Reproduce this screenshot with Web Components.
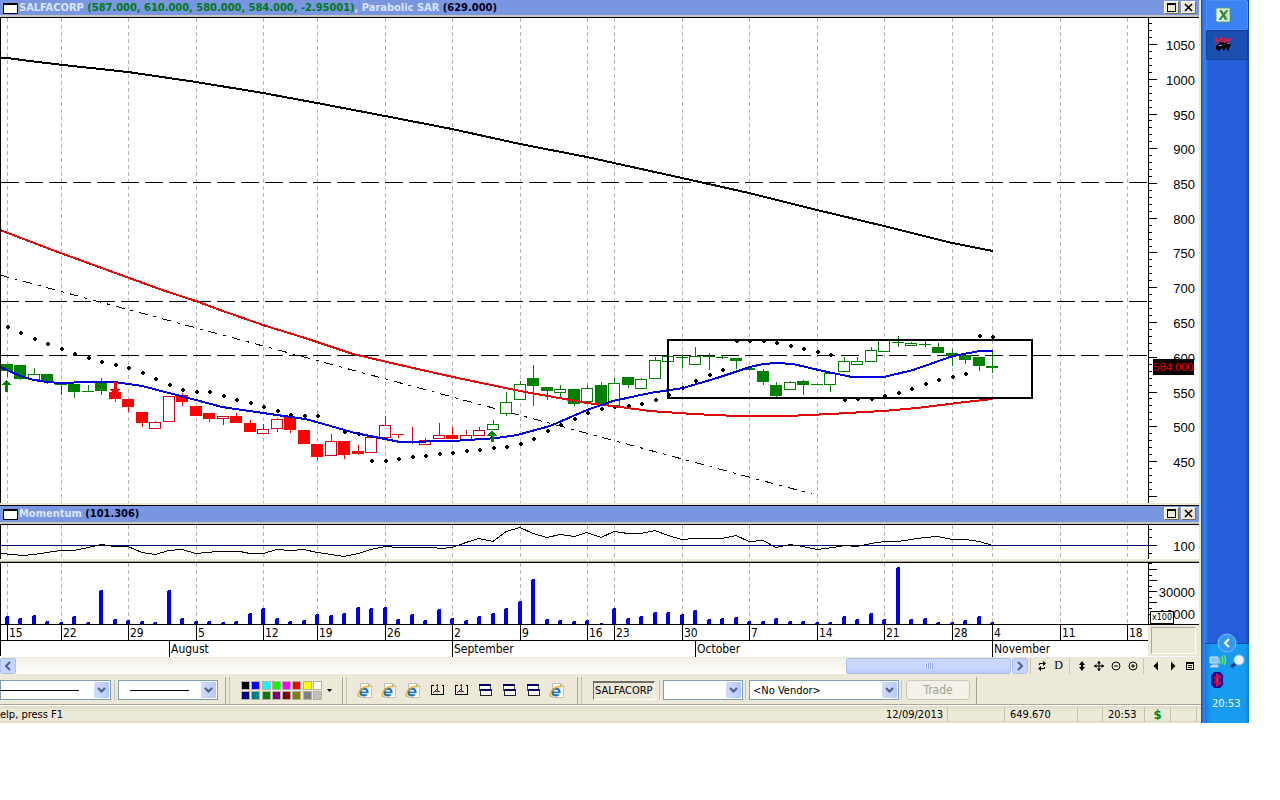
<!DOCTYPE html>
<html lang="en">
<head>
<meta charset="utf-8">
<title>SALFACORP chart</title>
<style>
  body { margin: 0; background: #fff; font: 11px/14px "DejaVu Sans Condensed", "Noto Sans", sans-serif; color: #000; }
</style>
</head>
<body>
<chart-desk></chart-desk>
<script>
const STEP = 13.5, FIRST = 7, PLOT = 1148;
const at = i => Math.floor(FIRST + STEP * i);
const DAYS = [[0,'15'],[4,'22'],[9,'29'],[14,'5'],[19,'12'],[23,'19'],[28,'26'],[33,'2'],[38,'9'],[43,'16'],[45,'23'],[50,'30'],[55,'7'],[60,'14'],[65,'21'],[70,'28'],[73,'4'],[78,'11'],[83,'18']];
const MONTHS = [[12,'August'],[33,'September'],[51,'October'],[73,'November']];
const grid = h => DAYS.map(([i]) => `<path d="M${at(i)+.5} 0V${h}" stroke="#b4b4b4" stroke-dasharray="4 3"/>`).join('');
const line = (pts, color, w, dy) => `<polyline fill="none" stroke="${color}" stroke-width="${w}" points="${pts.map(([x,y]) => x + ',' + (y - dy)).join(' ')}"/>`;

function define(name, css, html, setup) {
  const t = document.createElement('template');
  t.innerHTML = `<style>*{box-sizing:border-box}${css}</style>${html}`;
  customElements.define(name, class extends HTMLElement {
    constructor() {
      super();
      this.attachShadow({ mode: 'open' }).append(t.content.cloneNode(true));
      if (setup) setup(this, this.shadowRoot);
    }
  });
}

/* Caption strip of one chart pane, with its maximise and close buttons */
define('pane-title', `
  :host { display: flex; align-items: center; height: 17px; padding: 0 3px; background: #7b96e0; border-bottom: 2px solid #c9c7bd; font-weight: bold; color: #d9e5fb; }
  i { align-self: flex-start; width: 15px; height: 11px; margin: 3px 1px 0 0; background: #fff; border: 1px solid #000; border-top-width: 2px; }
  span { flex: 1; white-space: nowrap; }
  button { align-self: flex-start; width: 15px; height: 13px; padding: 0; margin: 1px 0 0 2px; background: #ece9d8; border: 1px solid; border-color: #fff #716f64 #716f64 #fff; display: grid; place-items: center; }
  svg { width: 9px; height: 9px; }`,
  `<i></i><span><slot></slot></span>
   <button aria-label="Maximise"><svg viewBox="0 0 9 9" fill="none" stroke="#000"><path d="M.5 1.500h8v7h-8zM0 .5h9" shape-rendering="crispEdges"/></svg></button>
   <button aria-label="Close"><svg viewBox="0 0 9 9"><path d="M1 1l7 7M8 1l-7 7" stroke="#000" stroke-width="1.600"/></svg></button>`);

const paneCss = `
  :host { display: grid; grid-template-columns: minmax(0,1fr) 51px; background: #fff; }
  svg { display: block; width: 100%; }
  .plot { border-left: 1px solid #000; }
  text { font: 13px "Liberation Sans", Arial, sans-serif; text-anchor: end; }`;

/* Price pane: candles, two averages, parabolic stops, support lines */
const CANDLES = [
 'gf364,371,364,377','gf365,379,365,380','gh374,379,368,379','gf374,381,374,384','gf384,385,384,395','gf384,392,384,398','gf391,392,385,391','gf382,391,378,395',
 'rf392,399,392,402','rf399,407,399,412','rf412,423,412,427','rh422,428,421,428','rh396,421,396,422','rf395,402,393,406','rf406,416,406,416','rf413,419,413,422','rh416,418,416,425','rf416,423,413,423','rf423,432,420,432','rh429,433,424,433','rh419,428,418,432','rf417,430,417,433','rf430,444,430,444','rf444,457,444,460','rh441,455,434,455','rf441,455,441,459','rf451,454,445,455','rh437,452,437,452','rh425,437,416,437','rf434,435,434,438','rn427,427,427,444','rh440,444,438,444','rh435,438,423,438','rf435,439,427,439','rh435,439,430,439','rh430,435,427,435',
 'gh424,429,420,429','gh402,413,392,416','gh384,399,381,399','gf378,386,365,406','gf387,391,387,400','gh389,392,385,399','gf389,404,389,406','gh388,401,385,401','gf385,404,382,404','gh383,405,378,405','gf377,385,377,388','gh379,388,378,388','gh360,378,357,378','gh356,361,356,361','gf357,358,355,368','gh356,364,347,364','gf356,357,353,370','gf357,358,355,359','gf358,361,358,369','gf368,370,368,370','gf371,382,369,385','gf385,396,382,399','gh382,389,381,389','gf381,385,380,395','gf384,385,384,385','gh373,384,373,392','gh361,371,357,371','gh361,364,357,364','gh350,361,347,361','gh340,351,340,351','gf342,343,336,347','gh343,345,342,345','gf344,345,341,347','gf347,353,343,353','gf353,356,349,366','gf355,360,355,364','gf357,366,357,371','gf366,368,351,373'];
const SAR = [327,333,339,344,349,354,358,362,365,368,373,379,385,390,392,392,396,400,403,407,411,415,416,416,0,432,434,461,461,459,457,456,454,453,451,450,448,447,444,439,431,425,419,413,409,407,406,404,400,395,388,381,375,370,341,341,341,343,346,349,352,355,400,399,399,396,393,389,384,380,377,374,336,337];
const SLOW = [[0,58],[7,58],[30,61],[63,65],[128,72],[196,82],[263,93],[317,103],[385,116],[452,129],[520,144],[587,157],[614,163],[682,178],[749,193],[817,210],[884,226],[952,243],[993,251]];
const MID = [[0,230],[55,251],[110,271],[165,291],[196,301],[220,310],[263,325],[305,338],[353,354],[387,362],[453,377],[520,391],[587,403],[620,407],[650,411],[693,414],[737,416],[787,416],[830,414],[883,411],[917,408],[957,403],[993,399]];
const FAST = [[0,367],[7,370],[20,376],[34,380],[47,382],[61,383],[88,382],[115,382],[142,386],[169,393],[196,400],[222,407],[263,413],[305,419],[320,423],[355,433],[400,442],[453,441],[497,438],[517,435],[550,426],[587,410],[613,401],[650,393],[683,388],[717,378],[750,367],[763,364],[777,363],[793,364],[823,371],[852,377],[884,377],[913,370],[933,363],[953,356],[980,351],[993,351]];
define('price-pane', paneCss + `
  svg { height: 485px; }
  .scale { position: relative; }
  output { position: absolute; left: 5px; top: 341px; width: 41px; height: 16px; background: #000; color: #f00000; font: 11px/16px "Liberation Sans", Arial, sans-serif; text-align: center; }`,
  `<svg class="plot" viewBox="1 18 1147 485" preserveAspectRatio="none" role="img" aria-label="Price chart"></svg>
   <div class="scale"><svg class="axis" viewBox="0 0 51 485"></svg><output>584.000</output></div>`,
  (host, root) => {
    const candles = CANDLES.map((c, i) => {
      const color = c[0] === 'g' ? '#008000' : (c[1] === 'f' ? '#f00' : '#d00020'), [t, b, hi, lo] = c.slice(2).split(',').map(Number), x = at(i);
      const wick = (a, z) => z > a ? `<path d="M${x+.5} ${a}V${z}" stroke="${color}"/>` : '';
      const body = c[1] === 'f' ? `<rect x="${x-6}" y="${t}" width="12" height="${b-t}" fill="${color}"/>`
        : c[1] === 'h' ? `<rect x="${x-5.5}" y="${t+.5}" width="11" height="${b-t}" fill="#fff" stroke="${color}"/>`
        : '';
      return wick(hi, c[1] === 'n' ? lo : t) + body + wick(b, lo);
    }).join('');
    const sar = SAR.map((y, i) => y ? `<path d="M${at(i)-1} ${y-1}h4v2h-4zM${at(i)} ${y-2}h2v4h-2z"/>` : '').join('');
    root.querySelector('.plot').innerHTML = `<g shape-rendering="crispEdges"><g transform="translate(0 18)">${grid(485)}</g>
      ${[182.5,301.5,355.5].map(y => `<path d="M1 ${y}H1148" stroke="#000" stroke-dasharray="18 6"/>`).join('')}
      <path d="M0 275L812 494" stroke="#000" stroke-dasharray="9 6 3 6"/>${candles}${sar}
      ${line(SLOW,'#000',2,0)}${line(MID,'#e00a0a',2,0)}${line(FAST,'#0000d8',2,0)}
      <path d="M6 380l5 5h-3v7H5v-7H2zM492 430l5 6h-3v6h-3v-6h-4z" fill="#008000"/><path d="M114 382h3v7h3l-5 7-5-7h4z" fill="#f00"/>
      <rect x="668" y="340" width="364" height="58" fill="none" stroke="#000" stroke-width="2"/></g>`;
    let s = '<path d="M.5 0V485" stroke="#000"/>';
    for (let v = 1080; v >= 400; v -= 10) {
      const y = Math.round(44 + (1050 - v) * .695) - 18;
      s += `<path d="M0 ${y+.5}h${v % 50 ? 4 : 9}" stroke="#000"/>`;
      if (v % 50 === 0 && v > 400) s += `<text x="47" y="${y+6}">${v}</text>`;
    }
    root.querySelector('.axis').innerHTML = s;
  });

const MOM = [[0,553],[13,554],[22,555],[34,554],[47,552],[61,550],[74,550],[88,547],[101,544],[115,546],[128,546],[142,552],[155,554],[169,550],[182,549],[196,553],[218,551],[240,551],[250,553],[263,553],[277,549],[290,550],[304,549],[317,552],[331,554],[344,556],[358,553],[371,549],[385,546],[398,547],[433,547],[440,548],[452,547],[466,542],[479,538],[493,541],[506,531],[520,527],[533,533],[547,537],[560,534],[574,536],[587,532],[601,537],[614,531],[628,533],[641,533],[655,530],[668,535],[682,539],[695,538],[722,538],[736,535],[749,541],[763,540],[776,547],[790,544],[803,546],[817,549],[833,547],[845,545],[857,546],[871,543],[884,541],[898,541],[911,539],[924,537],[938,536],[952,539],[965,539],[979,541],[993,545]];
define('momentum-pane', paneCss + `svg { height: 34px; }`,
  `<svg class="plot" viewBox="1 0 1147 34" preserveAspectRatio="none" role="img" aria-label="Momentum"></svg>
   <svg viewBox="0 0 51 34"><path d="M.5 0V34M0 4.500h4M0 12.500h4M0 20.500h9M0 28.500h4" stroke="#000"/><text x="47" y="26">100</text></svg>`,
  (host, root) => { root.querySelector('.plot').innerHTML = `<g shape-rendering="crispEdges">${grid(34)}<path d="M0 20.500H1149" stroke="#000070"/>${line(MOM,'#000',1,524.5)}</g>`; });

const VOLUME = [616,618,615,621,622,616,622,590,619,620,621,622,590,618,621,621,622,621,613,608,618,621,620,614,615,613,607,608,607,619,614,620,609,618,620,616,613,608,601,579,619,620,621,620,623,608,618,616,612,612,614,610,619,618,617,621,621,618,621,621,622,622,616,619,613,619,567,619,618,622,622,620,616,622];
define('volume-pane', paneCss + `
  svg { height: 61px; }
  .scale { position: relative; }
  span { position: absolute; left: 2px; bottom: 0; width: 24px; height: 13px; border: 1px solid #000; background: #fff; font-size: 9px; line-height: 11px; text-align: center; }`,
  `<svg class="plot" viewBox="1 0 1147 61" preserveAspectRatio="none" role="img" aria-label="Volume"></svg>
   <div class="scale"><svg class="axis" viewBox="0 0 51 61"><path d="M.5 0V61M0 .5h4M0 6.500h9M0 12.500h4M0 17.500h9M0 23.500h4M0 28.500h9M0 34.500h4M0 39.500h9M0 45.500h4M0 51.500h4" stroke="#000"/><text x="47" y="34">30000</text><text x="47" y="56">10000</text></svg><span>x100</span></div>`,
  (host, root) => { root.querySelector('.plot').innerHTML = `<g shape-rendering="crispEdges">${grid(61)}${VOLUME.map((y, i) => `<path d="M${at(i)-2} 61V${y-562}h1v-1h3V61z" fill="#0000e0"/>`).join('')}</g>`; });

/* Calendar below the charts: a row of week starts, a row of months */
define('date-axis', `
  :host { display: grid; grid-template-columns: minmax(0,1fr) 51px; background: #ece9d8; border-top: 1px solid #000; font-size: 12px; line-height: 16px; }
  .rows { background: #fff; border-left: 1px solid #000; }
  .row { display: grid; height: 15px; }
  .row + .row { border-top: 1px solid #000; height: 16px; }
  .row span { border-left: 1px solid #000; padding-left: 1px; white-space: nowrap; }
  .row span:first-child { border: 0; }
  .well { margin: 2px 3px 2px 3px; border: 1px solid; border-color: #aca899 #fff #fff #aca899; }`,
  `<div class="rows"><div class="row"></div><div class="row"></div></div><div class="well"></div>`,
  (host, root) => {
    [DAYS, MONTHS].forEach((set, n) => {
      const row = root.querySelectorAll('.row')[n], edges = [1, ...set.map(([i]) => at(i)), PLOT];
      row.style.gridTemplateColumns = edges.slice(1).map((e, k) => `minmax(0,${e - edges[k]}fr)`).join(' ');
      row.innerHTML = '<span></span>' + set.map(([, t]) => `<span>${t}</span>`).join('');
    });
  });

const icon = (label, art) => `<button aria-label="${label}"><svg viewBox="0 0 12 12" fill="none" stroke="#000">${art}</svg></button>`;
define('scroll-strip', `
  :host { display: flex; align-items: center; height: 20px; background: #ece9d8; border-top: 1px solid #fff; padding: 0 3px 2px 0; }
  .bar { flex: 1; display: flex; height: 16px; background: linear-gradient(#f1efe8, #fefefb); }
  .bar button { width: 16px; border: 1px solid #aebfee; border-radius: 2px; background: #c6d5fd; padding: 0; display: grid; place-items: center; }
  .bar button svg { width: 8px; height: 10px; }
  .track { flex: 1; display: grid; grid-template-columns: 830fr 165fr; padding-right: 1px; }
  .thumb { grid-column: 2; border: 1px solid #aebfee; border-radius: 2px; background: linear-gradient(#cad8fe 60%, #b8cbf8); display: grid; place-items: center; }
  .thumb i { width: 8px; height: 6px; background: repeating-linear-gradient(90deg, #eef3ff 0 1px, #8ba3dc 1px 2px); }
  .tools { display: flex; height: 16px; margin-left: 1px; }
  .tools button { width: 17px; padding: 0; border: 0; background: none; display: grid; place-items: center; font: 12px "Liberation Serif", serif; }
  .tools svg { width: 12px; height: 12px; }
  hr { width: 2px; margin: 0 2px; border: 0; border-left: 1px solid #c8c5b2; }
  hr:first-child { margin: 0 1px; }`,
  `<div class="bar"><button aria-label="Scroll left"><svg viewBox="0 0 8 10"><path d="M6 1L2 5l4 4" fill="none" stroke="#4d6185" stroke-width="2"/></svg></button>
   <div class="track"><div class="thumb"><i></i></div></div>
   <button aria-label="Scroll right"><svg viewBox="0 0 8 10"><path d="M2 1l4 4-4 4" fill="none" stroke="#4d6185" stroke-width="2"/></svg></button></div>
   <div class="tools"><hr>${icon('Refresh','<path d="M3.500 5V3.500h4M8.500 7v1.500h-4"/><path d="M7 1l3 2.500L7 6zM5 6v5L2 8.500z" fill="#000" stroke="none"/>')}
   <button>D</button><hr>
   ${icon('Stretch','<path d="M6 3v6" stroke-width="2"/><path d="M6 1l3 4H3zM6 11L3 7h6z" fill="#000" stroke="none"/>')}
   ${icon('Move','<path d="M6 1v10M1 6h10"/><path d="M6 1l2 2.500h-4zM6 11l2-2.500h-4zM1 6l2.500-2v4zM11 6L8.500 4v4z" fill="#000" stroke="none"/>')}
   ${icon('Zoom out','<circle cx="6" cy="6" r="4"/><path d="M4 6h4"/>')}
   ${icon('Zoom in','<circle cx="6" cy="6" r="4"/><path d="M4 6h4M6 4v4"/>')}<hr>
   ${icon('Previous','<path d="M8 1.500v9L3.500 6z" fill="#000" stroke="none"/>')}
   ${icon('Next','<path d="M4 1.500v9L8.500 6z" fill="#000" stroke="none"/>')}
   ${icon('List','<path d="M2.500 2.500h7v7h-7zM2 3.500h8M4 5.500h4M4 7.500h4" shape-rendering="crispEdges"/>')}</div>`);

/* Drop-down with an optional sample of the chosen line */
define('combo-box', `
  :host { display: block; height: 20px; position: relative; }
  select { appearance: none; width: 100%; height: 20px; border: 1px solid #7f9db9; border-radius: 0; background: #fff; padding: 1px 18px 0 3px; font: inherit; color: #000; }
  svg { position: absolute; right: 2px; top: 2px; width: 15px; height: 16px; background: linear-gradient(90deg, #d0dcfd, #b4c8f6); border-radius: 1px; pointer-events: none; }
  i { position: absolute; top: 10px; left: var(--rule-start, 0); width: var(--rule, 0); height: 1px; background: #000; pointer-events: none; }`,
  `<select></select><i></i><svg viewBox="0 0 15 16"><path d="M4 6l3.500 3.500L11 6" fill="none" stroke="#4d6185" stroke-width="2.200"/></svg>`,
  (host, root) => {
    const s = root.querySelector('select');
    s.setAttribute('aria-label', host.getAttribute('label'));
    s.add(new Option(host.getAttribute('value') || ''));
  });

const IE = `<svg viewBox="0 0 16 16"><path d="M3.500 1.500h8l3 3v11h-11z" fill="#fff" stroke="#c3c0b0"/><path d="M11.500 1.500v3h3z" fill="#dedbd0" stroke="#b9b6a4"/><ellipse cx="7" cy="10" rx="3.600" ry="3.400" fill="#fff" stroke="#1f74c4" stroke-width="2.200"/><path d="M4 10.300h7" stroke="#1f74c4" stroke-width="1.600"/><path d="M8 11.200h4v1.400H9z" fill="#fff"/><path d="M3 14.500c-3 .2-2-4.500 1.500-7.500S12 3.500 11 6.500" fill="none" stroke="#efb020" stroke-width="1.300"/></svg>`;
const GRAPH = `<svg viewBox="0 0 16 16" fill="none" shape-rendering="crispEdges"><path d="M4.500 3.500h-2v9h12v-9h-2" stroke="#000"/><path d="M4 11l4-4M8.500 2v7M6 9.500h5M7 3.500h2" stroke="#702848"/></svg>`;
const WINS = `<svg viewBox="0 0 16 16" shape-rendering="crispEdges"><path d="M2.500 2.500h11v6h-11z" fill="#fff" stroke="#445"/><path d="M3.500 7.500h11v6h-11z" fill="#fff" stroke="#223"/><path d="M2 2h12v2H2zM3 7h12v2H3z" fill="#000070"/></svg>`;
const COLORS = ['#000','#00f','#0ff','#0f0','#f0f','#f00','#ff0','#fff','#000080','#008080','#008000','#800080','#800000','#808000','#808080','#c0c0c0'];
define('tool-bar', `
  :host { display: flex; align-items: center; height: 29px; background: #ece9d8; border-bottom: 1px solid #aca899; }
  .grip { width: 5px; height: 27px; border-left: 1px solid #aca899; border-right: 1px solid #c4c1b0; flex: none; }
  .sep { width: 1px; height: 20px; background: #c8c5b2; margin: 0 3px 0 2px; flex: none; }
  .palette { display: grid; grid-template-columns: repeat(8, 9px); gap: 1px; margin: 0 5px 0 10px; padding: 1px; width: 83px; justify-content: space-between; }
  .palette button { width: 9px; height: 9px; padding: 0; border: 1px solid #b5b2a3; }
  .drop { padding: 0; border: 0; background: none; width: 7px; height: 12px; margin-right: 9px; display: grid; place-items: center; }
  .drop svg { width: 5px; height: 3px; }
  .grip + .icons { margin-left: 10px; }
  .icons { display: flex; gap: 8px; margin-right: 10px; }
  .icons button { width: 16px; height: 16px; padding: 0; border: 0; background: none; }
  .icons svg { display: block; width: 16px; height: 16px; }
  input { width: 62px; height: 19px; margin: 0 2px 0 11px; padding: 0 0 0 1px; border: 1px solid; border-color: #716f64 #fff #fff #716f64; background: #ece9d8; font: inherit; flex: none; border-top-width: 2px; }
  .trade { width: 64px; height: 20px; margin: 0 6px 0 0; padding: 0; border: 1px solid #c9c7ba; border-radius: 3px; background: #f4f2e8; color: #a1a192; font: inherit; font-size: 12px; }`,
  `<combo-box label="Line style" style="width:111px;--rule:79px"></combo-box><span class="sep" style="margin-left:3px"></span>
   <combo-box label="Line weight" style="width:100px;--rule-start:12px;--rule:59px"></combo-box>
   <span class="grip" style="margin-left:7px"></span>
   <div class="palette">${COLORS.map(c => `<button aria-label="Colour ${c}" style="background:${c}"></button>`).join('')}</div>
   <button class="drop" aria-label="More colours" style="margin-left:-2px"><svg viewBox="0 0 5 3"><path d="M0 0h5L2.500 3z"/></svg></button>
   <span class="grip"></span>
   <div class="icons">${[IE,IE,IE,GRAPH,GRAPH,WINS,WINS,WINS,IE].map((s, i) => `<button aria-label="Tool ${i + 1}">${s}</button>`).join('')}</div>
   <span class="grip" style="margin-left:2px"></span><input aria-label="Security" value="SALFACORP"><span class="sep"></span>
   <combo-box label="Account" style="width:80px"></combo-box><span class="sep"></span>
   <combo-box label="Vendor" value="&lt;No Vendor&gt;" style="width:150px"></combo-box><span class="sep" style="margin-right:4px"></span>
   <button class="trade" disabled>Trade</button><span class="grip" style="border-right:0"></span>`);

define('status-bar', `
  :host { display: flex; align-items: center; height: 18px; background: linear-gradient(#dedbc9, #ece9d8 5px 13px, #e0ddcb); border-top: 1px solid #fff; }
  span { height: 15px; line-height: 16px; border-right: 1px solid #c5c2b0; white-space: nowrap; }
  .help { flex: 1; border: 0; }
  b { color: #008a10; font-size: 13px; }`,
  `<span class="help">elp, press F1</span><span style="width:64px;padding-left:2px">12/09/2013</span><span style="width:57px"></span><span style="width:73px;padding-left:5px">649.670</span><span style="width:25px"></span><span style="width:42px;padding-left:5px">20:53</span><span style="width:26px;text-align:center"><b>$</b></span><span style="width:26px"></span><span style="width:4px;border:0"></span>`);

/* Vertical desktop task bar with its notification area */
define('task-bar', `
  :host { display: flex; flex-direction: column; background: linear-gradient(90deg, #1c55b8 0 1px, #2f80e8 2px 5px, #245edb 7px 44px, #1941a5 48px); padding: 0 1px 0 5px; }
  .app { height: 30px; border: 1px solid #4b90f8; border-radius: 2px; background: #3c81f3; padding: 0 0 0 8px; text-align: left; }
  .app.on { background: #1c4fb2; border-color: #153f92; }
  .app svg { display: block; width: 17px; height: 16px; }
  .tray { margin: auto -1px 0 -1px; height: 80px; background: linear-gradient(90deg, #1380d8, #179bf0 6px 40px, #1180d4); border-top: 1px solid #0c4fa8; display: flex; flex-direction: column; color: #fff; }
  .more { width: 20px; height: 20px; margin: -11px 0 0 12px; padding: 0; border: 0; background: none; }
  .icons { display: grid; grid-template-columns: 20px 18px; margin-left: 4px; }
  svg { display: block; }
  time { margin: 7px 0 0 7px; font-size: 11px; line-height: 16px; }`,
  `<button class="app" aria-label="Spreadsheet"><svg viewBox="0 0 17 16"><rect x="1" y="1" width="14" height="14" rx="1" fill="#eaf5e4" stroke="#4fa45d"/><path d="M4 3h3l1.500 3L11 3h2.500L10 8l3 5h-3L8 10l-2 3H3.500L7 8z" fill="#2f8b3c"/><path d="M12 5v8" stroke="#8ac284"/></svg></button>
   <button class="app on" aria-label="Charts"><svg viewBox="0 0 17 16"><path d="M1 7V1l3 3 3-3v5M10 6V2l3 2 3-3M10 4l5 2" fill="none" stroke="#d02048" stroke-width="1.800"/><path d="M1 9l4-4 4 1 4-1 3 3-2 3v3l-2-1-1-3-2 4-2-3-3 3-3-2z" fill="#080808"/><path d="M4 9l3-1M12 7l2-1" stroke="#7cc8b8"/></svg></button>
   <div class="tray"><button class="more" aria-label="Show hidden icons"><svg viewBox="0 0 20 20" width="20" height="20"><circle cx="10" cy="10" r="9" fill="#3298f0" stroke="#7cc4fb"/><path d="M12 6l-4 4 4 4" fill="none" stroke="#fff" stroke-width="2"/></svg></button>
   <div class="icons"><svg viewBox="0 0 18 18" width="18" height="18"><path d="M1 4h8v6H1z" fill="#86c8f0" stroke="#d0e8f8"/><path d="M3 12h6v2H1z" fill="#d8e6ea" stroke="#b5ccd8"/><path d="M10 5q2 3 0 6M12.500 3q3 5 0 8M15 2q3 5 0 10" stroke="#70ef50" fill="none" stroke-width="1.300"/></svg>
   <svg viewBox="0 0 18 18" width="18" height="18"><path d="M7 10l-5 4" stroke="#233e80" stroke-width="3"/><circle cx="10" cy="7" r="5" fill="#e4f3ff" stroke="#a8c5dc"/></svg>
   <svg viewBox="0 0 18 18" width="18" height="18"><path d="M5 1h6l3 3v10l-3 3H5l-3-3V4z" fill="#0808a0"/><path d="M5 6l6 6-3 2.500V3.500L11 6l-6 6" fill="none" stroke="#ff1030" stroke-width="1.600"/></svg></div>
   <time>20:53</time></div>`);

define('chart-desk', `
  :host { display: grid; grid-template-columns: minmax(0,1fr) 48px; padding-right: 31px; }
  .window { background: #ece9d8; min-width: 0; }
  .charts { display: block; margin-right: 2px; }
  .g { color: #007818; } .k { color: #000020; }
  .first { border-bottom: 1px solid #000; }
  .second { margin-top: 2px; border: solid #000; border-width: 1px 0; }
  .second pane-title { height: 18px; }
  momentum-pane { margin-bottom: 2px; }
  volume-pane { border-top: 1px solid #000; box-shadow: 0 -1px #aca899; margin-top: 3px; }`,
  `<main class="window"><div class="charts">
    <div class="first"><pane-title>SALFACORP <span class="g">(587.000, 610.000, 580.000, 584.000, -2.95001)</span>, Parabolic SAR <span class="k">(629.000)</span></pane-title></div>
    <price-pane></price-pane>
    <div class="second"><pane-title>Momentum <span class="k">(101.306)</span></pane-title></div>
    <momentum-pane></momentum-pane><volume-pane></volume-pane><date-axis></date-axis></div>
    <scroll-strip></scroll-strip><tool-bar></tool-bar><status-bar></status-bar></main>
   <task-bar></task-bar>`);
</script>
</body>
</html>
